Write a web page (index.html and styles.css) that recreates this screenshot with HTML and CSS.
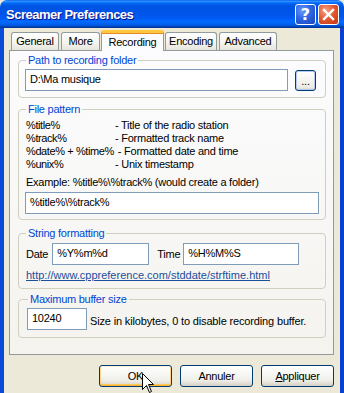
FILE: index.html
```html
<!DOCTYPE html>
<html>
	<head>
		<meta charset="UTF-8">
		<title>Screamer Preferences</title>
		<link rel="stylesheet" href="styles.css">
	</head>
	<body>
		<div class="window">
			<div class="titlebar">
				<span class="title">Screamer Preferences</span>
				<div class="caption">
					<span class="cap help">?</span>
					<span class="cap close">
						<svg width="13" height="13" viewBox="0 0 13 13"><path d="M2 2 L11 11 M11 2 L2 11" stroke="#fff" stroke-width="2.4" stroke-linecap="square"/></svg>
					</span>
				</div>
			</div>
			<div class="frame">
				<div class="tabs">
					<span class="tab t-general">General</span>
					<span class="tab t-more">More</span>
					<span class="tab active">Recording</span>
					<span class="tab t-encoding">Encoding</span>
					<span class="tab t-advanced">Advanced</span>
				</div>
				<div class="panel">
					<fieldset class="group g-path">
						<legend>Path to recording folder</legend>
						<div class="row">
							<div class="field grow">D:\Ma musique</div>
							<span class="browse">...</span>
						</div>
					</fieldset>
					<fieldset class="group g-pattern">
						<legend>File pattern</legend>
						<ul class="tokens">
							<li><span class="tok">%title%</span><span class="desc">- Title of the radio station</span></li>
							<li><span class="tok">%track%</span><span class="desc">- Formatted track name</span></li>
							<li><span class="tok">%date% + %time%</span><span class="desc">- Formatted date and time</span></li>
							<li><span class="tok">%unix%</span><span class="desc">- Unix timestamp</span></li>
						</ul>
						<p class="example">Example: %title%\%track% (would create a folder)</p>
						<div class="field">%title%\%track%</div>
					</fieldset>
					<fieldset class="group g-format">
						<legend>String formatting</legend>
						<div class="row">
							<label>Date</label>
							<div class="field date">%Y%m%d</div>
							<label class="time-label">Time</label>
							<div class="field time">%H%M%S</div>
						</div>
						<a class="link" href="javascript:;">http://www.cppreference.com/stddate/strftime.html</a>
					</fieldset>
					<fieldset class="group g-buffer">
						<legend>Maximum buffer size</legend>
						<div class="row">
							<div class="field size">10240</div>
							<span class="note">Size in kilobytes, 0 to disable recording buffer.</span>
						</div>
					</fieldset>
				</div>
				<div class="buttons">
					<span class="btn default">OK</span>
					<span class="btn">Annuler</span>
					<span class="btn"><u>A</u>ppliquer</span>
				</div>
			</div>
			<svg class="cursor" width="13" height="21" viewBox="0 0 13 21">
				<path d="M0.5 0.5 L0.5 16.5 L4.5 12.5 L7.5 19.5 L9.5 18.5 L6.5 11.5 L11.5 11.5 Z" fill="#fff" stroke="#000" stroke-width="1"/>
			</svg>
		</div>
	</body>
</html>
```

FILE: styles.css
```css
body{
	margin: 0;
	background: #ece9d8;
	font-family: "Liberation Sans", Arial, sans-serif;
	font-size: 11px;
	letter-spacing: -0.25px;
	color: #000;
}
.window{
	position: relative;
	width: 344px;
	height: 393px;
	overflow: hidden;
	background: #ece9d8;
}
.titlebar{
	height: 28px;
	display: flex;
	align-items: center;
	justify-content: space-between;
	padding: 0 6px 0 6px;
	box-sizing: border-box;
	background: linear-gradient(to bottom, #0058ee 0%, #3593ff 4%, #288eff 6%, #127dff 8%, #036ffc 10%, #0262ee 14%, #0057e5 20%, #0054e3 24%, #0055eb 56%, #005bf5 66%, #026afe 76%, #0062ef 86%, #0052d6 92%, #0040ab 96%, #003092 100%);
	border-radius: 7px 7px 0 0;
}
.title{
	color: #fff;
	font-weight: bold;
	font-size: 13px;
	letter-spacing: -0.5px;
	text-shadow: 1px 1px #0f1089;
}
.caption{
	display: flex;
	gap: 2px;
	margin-right: -1px;
}
.cap{
	width: 19px;
	height: 19px;
	border: 1px solid #fff;
	border-radius: 3px;
	display: flex;
	align-items: center;
	justify-content: center;
	color: #fff;
}
.help{
	background: radial-gradient(circle at 35% 30%, #6a9cf7 0%, #2f66e4 45%, #1944b8 100%);
	font-weight: bold;
	font-size: 16px;
	letter-spacing: 0;
	font-family: "DejaVu Sans", sans-serif;
}
.close{
	background: radial-gradient(circle at 35% 30%, #f7a283 0%, #e2552f 50%, #c03612 100%);
}
.frame{
	height: 365px;
	border-left: 4px solid #0a4ad8;
	border-right: 4px solid #0a3fd0;
	background: #ece9d8;
}
.tabs{
	height: 22px;
	display: flex;
	align-items: flex-end;
	gap: 2px;
	padding-left: 7px;
	position: relative;
	z-index: 1;
}
.tab{
	height: 17px;
	line-height: 17px;
	box-sizing: content-box;
	text-align: center;
	border: 1px solid #919b9c;
	border-bottom: none;
	border-radius: 3px 3px 0 0;
	background: linear-gradient(to bottom, #ffffff, #f3f3ef 60%, #e6e5dc);
}
.t-general{ width: 46px; }
.t-more{ width: 37px; }
.t-encoding{ width: 50px; }
.t-advanced{ width: 56px; }
.tab.active{
	width: 61px;
	height: 18px;
	line-height: 19px;
	margin: 0 -1px -1px -1px;
	background: #fcfcfe;
	border-top: 3px solid #ffc83c;
	box-shadow: inset 0 1px #e68b2c;
	position: relative;
}
.panel{
	margin: 0 6px 0 5px;
	height: 300px;
	border: 1px solid #919b9c;
	background: linear-gradient(to bottom, #fcfcfe, #f4f3ee);
	padding: 3px 7px 0 8px;
}
.group{
	margin: 0;
	border: 1px solid #d0d0bf;
	border-radius: 4px;
	padding: 2px 9px 6px 6px;
}
legend{
	color: #0046d5;
	padding: 0 2px;
	margin-left: 1px;
	line-height: 13px;
}
.row{
	display: flex;
	align-items: center;
}
.field{
	line-height: 18px;
	border: 1px solid #7f9db9;
	background: #fff;
	padding: 0 4px;
	box-sizing: border-box;
	height: 22px;
}
.grow{
	flex: 1;
}
.browse{
	width: 21px;
	height: 21px;
	box-sizing: border-box;
	margin-left: 7px;
	border: 1px solid #003c74;
	border-radius: 3px;
	background: linear-gradient(to bottom, #ffffff, #ecebe6 85%, #d6d0c5);
	box-shadow: inset 0 0 0 1px #b6c9f0;
	text-align: center;
	line-height: 20px;
	font-size: 11px;
}
.group.g-pattern{
	margin-top: 5px;
	padding: 3px 6px 5px 6px;
}
.tokens{
	margin: 0;
	padding: 0 0 0 1px;
	list-style: none;
}
.tokens li{
	display: flex;
	line-height: 13px;
	white-space: nowrap;
}
.tok{
	min-width: 85px;
	padding-right: 4px;
	letter-spacing: -0.4px;
}
.example{
	margin: 5px 0 3px 1px;
	line-height: 13px;
}
.group.g-format{
	margin-top: 7px;
	padding: 3px 9px 6px 6px;
}
.g-format label{
	margin: 0 4px 0 1px;
}
.g-format .time-label{
	margin: 0 3px 0 8px;
}
.date{
	width: 97px;
}
.time{
	width: 116px;
}
.link{
	display: block;
	margin: 4px 0 0 1px;
	line-height: 13px;
	letter-spacing: 0;
	color: #1a4f9c;
}
.group.g-buffer{
	margin-top: 4px;
	padding: 2px 9px 7px 8px;
}
.size{
	width: 60px;
}
.note{
	margin-left: 3px;
	padding-top: 4px;
	white-space: nowrap;
	letter-spacing: -0.15px;
}
.buttons{
	display: flex;
	justify-content: flex-end;
	gap: 8px;
	margin: 10px 6px 0 0;
}
.btn{
	width: 73px;
	height: 22px;
	box-sizing: border-box;
	border: 1px solid #003c74;
	border-radius: 3px;
	background: linear-gradient(to bottom, #ffffff, #f0f0ea 70%, #d6d0c5);
	text-align: center;
	line-height: 20px;
}
.btn.default{
	box-shadow: inset 0 -1px #f8b330, inset 0 1px #fff0cf, inset 1px 0 #fcd38a, inset -1px 0 #fcd38a, inset 0 -2px #fac95e;
}
.cursor{
	position: absolute;
	left: 142px;
	top: 373px;
}
```
